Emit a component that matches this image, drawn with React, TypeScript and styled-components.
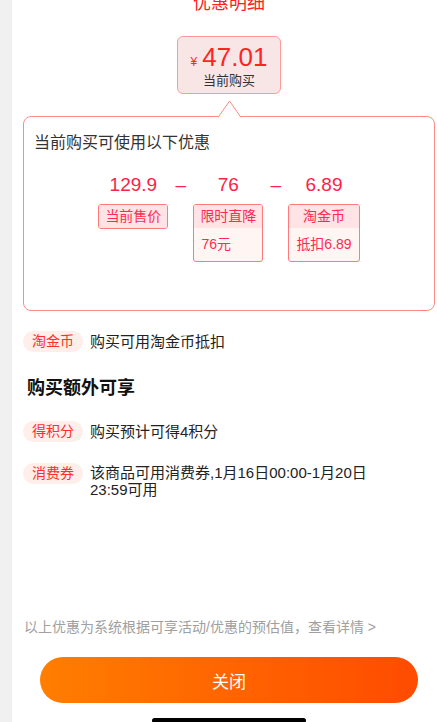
import React from 'react';
import styled, { createGlobalStyle } from 'styled-components';

const GlobalStyle = createGlobalStyle`
  html, body {
    margin: 0;
    padding: 0;
    background: #ffffff;
  }
  body {
    font-family: "Liberation Sans", "Noto Sans CJK SC", sans-serif;
    color: #222222;
    -webkit-font-smoothing: antialiased;
  }
`;

interface Discount {
  amount: string;
  label: string;
  detail?: string;
  detailAlign?: 'left' | 'center';
}

const discounts: Discount[] = [
  { amount: '129.9', label: '当前售价' },
  { amount: '76', label: '限时直降', detail: '76元', detailAlign: 'left' },
  { amount: '6.89', label: '淘金币', detail: '抵扣6.89', detailAlign: 'center' },
];

const App: React.FC = () => {
  return (
    <>
      <GlobalStyle />
      <Screen>
        <SideStrip />
        <Panel>
          <Title>优惠明细</Title>

          <PriceBox>
            <PriceLine>
              <Yen>¥</Yen>
              <PriceValue>47.01</PriceValue>
            </PriceLine>
            <PriceCaption>当前购买</PriceCaption>
          </PriceBox>

          <Card>
            <Pointer width="23" height="18" viewBox="0 0 23 18">
              <polygon points="0,17.5 11.5,1 23,17.5" fill="#ffffff" />
              <polyline
                points="0,17.5 11.5,1 23,17.5"
                fill="none"
                stroke="#ff8a8a"
                strokeWidth="1"
              />
            </Pointer>
            <CardHeading>当前购买可使用以下优惠</CardHeading>
            <Formula>
              {discounts.map((d, i) => (
                <React.Fragment key={d.label}>
                  {i > 0 && <Minus style={{ gridColumn: i * 2 }}>–</Minus>}
                  <Amount style={{ gridColumn: i * 2 + 1 }}>{d.amount}</Amount>
                </React.Fragment>
              ))}
              {discounts.map((d, i) => (
                <TagBox key={d.label + '-tag'} style={{ gridColumn: i * 2 + 1 }}>
                  <TagHead>{d.label}</TagHead>
                  {d.detail && <TagDetail $align={d.detailAlign}>{d.detail}</TagDetail>}
                </TagBox>
              ))}
            </Formula>
          </Card>

          <Row $first>
            <Pill>淘金币</Pill>
            <RowText>购买可用淘金币抵扣</RowText>
          </Row>

          <SectionTitle>购买额外可享</SectionTitle>

          <Row>
            <Pill>得积分</Pill>
            <RowText>购买预计可得4积分</RowText>
          </Row>

          <Row>
            <Pill>消费券</Pill>
            <RowText $wrap>该商品可用消费券,1月16日00:00-1月20日 23:59可用</RowText>
          </Row>

          <Footnote>以上优惠为系统根据可享活动/优惠的预估值，查看详情 &gt;</Footnote>
          <CloseButton>关闭</CloseButton>
          <HomeBar />
        </Panel>
      </Screen>
    </>
  );
};

export default App;

const Screen = styled.div`
  display: flex;
  width: 437px;
  height: 722px;
  overflow: hidden;
  background: #ffffff;
`;

const SideStrip = styled.div`
  width: 12px;
  flex-shrink: 0;
  background: #f0f0f0;
`;

const Panel = styled.div`
  flex: 1;
  display: flex;
  flex-direction: column;
  padding: 0 2px 0 11px;
  background: #ffffff;
`;

const Title = styled.div`
  margin-top: -9px;
  height: 24px;
  line-height: 24px;
  text-align: center;
  font-size: 18px;
  color: #ff2020;
`;

const PriceBox = styled.div`
  align-self: center;
  box-sizing: border-box;
  width: 104px;
  height: 58px;
  margin-top: 21px;
  border: 1px solid #ff9a9a;
  border-radius: 6px;
  background: #f8e6e7;
  display: flex;
  flex-direction: column;
  align-items: center;
`;

const PriceLine = styled.div`
  display: flex;
  align-items: baseline;
  margin-top: 5px;
  height: 30px;
  color: #ff2424;
`;

const Yen = styled.span`
  font-size: 12px;
  margin-right: 5px;
`;

const PriceValue = styled.span`
  font-size: 26px;
  line-height: 30px;
`;

const PriceCaption = styled.div`
  font-size: 13px;
  line-height: 16px;
  margin-top: 1px;
  color: #333333;
`;

const Card = styled.div`
  position: relative;
  box-sizing: border-box;
  height: 195px;
  margin-top: 22px;
  padding: 16px 10px 0;
  border: 1px solid #ff8a8a;
  border-radius: 8px;
`;

const Pointer = styled.svg`
  position: absolute;
  left: 194px;
  top: -17.5px;
  display: block;
`;

const CardHeading = styled.div`
  font-size: 16px;
  line-height: 20px;
  color: #333333;
`;

const Formula = styled.div`
  display: grid;
  grid-template-columns: auto 25px auto 25px auto;
  grid-template-rows: 24px auto;
  row-gap: 7px;
  justify-content: center;
  align-items: start;
  margin-top: 20px;
`;

const Amount = styled.div`
  grid-row: 1;
  text-align: center;
  font-size: 19px;
  line-height: 24px;
  color: #ff2247;
`;

const Minus = styled.div`
  grid-row: 1;
  text-align: center;
  font-size: 19px;
  line-height: 24px;
  color: #ff2247;
`;

const TagBox = styled.div`
  grid-row: 2;
  justify-self: center;
  box-sizing: border-box;
  border: 1px solid #ff7a7a;
  border-radius: 3px;
  overflow: hidden;
  background: #fff5f3;
  color: #ff2a4f;
  font-size: 14px;
`;

const TagHead = styled.div`
  height: 23px;
  line-height: 23px;
  padding: 0 6px;
  text-align: center;
  background: #ffe3e5;
`;

const TagDetail = styled.div<{ $align?: 'left' | 'center' }>`
  height: 33px;
  line-height: 33px;
  padding: 0 7px;
  text-align: ${(p) => p.$align ?? 'left'};
`;

const Row = styled.div<{ $first?: boolean }>`
  display: flex;
  align-items: flex-start;
  margin-top: ${(p) => (p.$first ? '20px' : '21px')};
`;

const Pill = styled.div`
  flex-shrink: 0;
  height: 21px;
  line-height: 21px;
  padding: 0 9px;
  border-radius: 11px;
  background: #ffeeea;
  color: #ff2d2d;
  font-size: 14px;
`;

const RowText = styled.div<{ $wrap?: boolean }>`
  margin-left: 7px;
  font-size: 15px;
  line-height: ${(p) => (p.$wrap ? '17px' : '21px')};
  margin-top: ${(p) => (p.$wrap ? '1px' : '0')};
  max-width: ${(p) => (p.$wrap ? '292px' : 'none')};
  color: #222222;
`;

const SectionTitle = styled.div`
  margin-top: 24px;
  padding-left: 4px;
  font-size: 18px;
  font-weight: bold;
  line-height: 24px;
  color: #111111;
`;

const Footnote = styled.div`
  margin-top: auto;
  padding-left: 1px;
  font-size: 14px;
  line-height: 20px;
  color: #a0a0a0;
`;

const CloseButton = styled.button`
  display: block;
  box-sizing: border-box;
  height: 46px;
  margin: 20px 17px 0;
  border: none;
  border-radius: 23px;
  background: linear-gradient(90deg, #ff7e00 0%, #ff4b00 100%);
  color: #ffffff;
  font-family: "Liberation Sans", "Noto Sans CJK SC", sans-serif;
  font-size: 17px;
`;

const HomeBar = styled.div`
  align-self: center;
  width: 154px;
  height: 5px;
  margin: 15px 0 -1px;
  border-radius: 3px;
  background: #000000;
`;
